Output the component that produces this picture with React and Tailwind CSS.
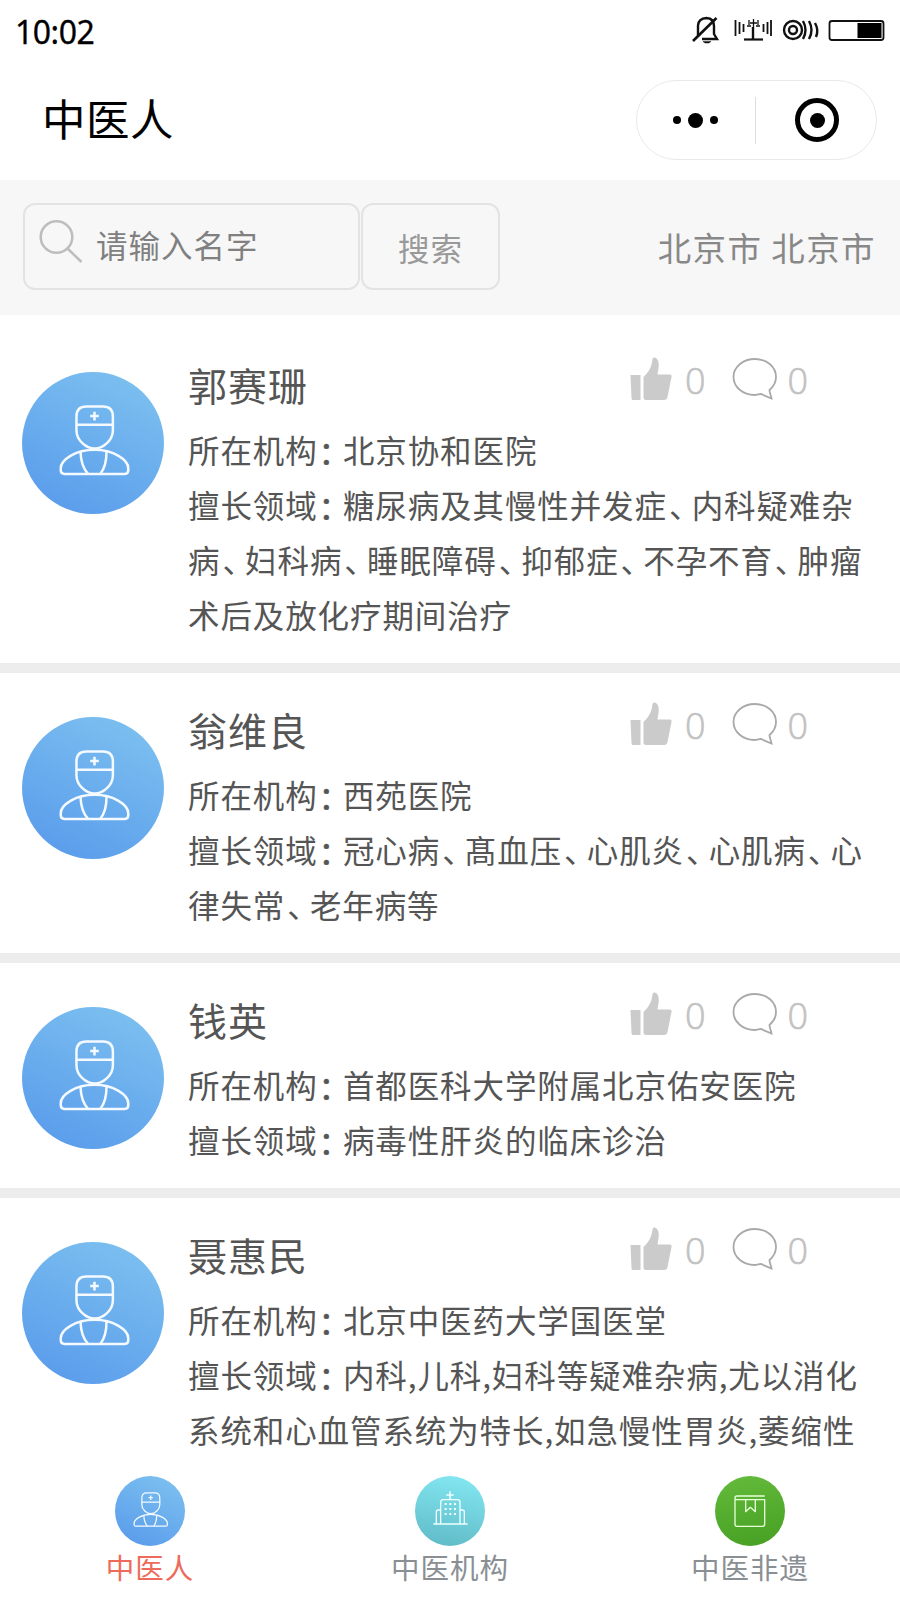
import clsx from "clsx";

const doctors = [
  {
    name: "郭赛珊",
    hospital: "北京协和医院",
    specialty: [
      "糖尿病及其慢性并发症、内科疑难杂",
      "病、妇科病、睡眠障碍、抑郁症、不孕不育、肿瘤",
      "术后及放化疗期间治疗",
    ],
  },
  {
    name: "翁维良",
    hospital: "西苑医院",
    specialty: ["冠心病、髙血压、心肌炎、心肌病、心", "律失常、老年病等"],
  },
  {
    name: "钱英",
    hospital: "首都医科大学附属北京佑安医院",
    specialty: ["病毒性肝炎的临床诊治"],
  },
  {
    name: "聂惠民",
    hospital: "北京中医药大学国医堂",
    specialty: [
      "内科,儿科,妇科等疑难杂病,尤以消化",
      "系统和心血管系统为特长,如急慢性胃炎,萎缩性",
    ],
  },
];

const tabs = [
  { label: "中医人", icon: DoctorIcon, active: true },
  { label: "中医机构", icon: HospitalIcon },
  { label: "中医非遗", icon: BookIcon },
];

function DoctorIcon({ className, id }) {
  return (
    <svg viewBox="0 0 425 425" className={className} fill="none">
      <defs>
        <linearGradient id={id} x1="0.75" y1="0" x2="0.25" y2="1">
          <stop offset="0" stopColor="#7cc0f0" />
          <stop offset="1" stopColor="#5a9ceb" />
        </linearGradient>
      </defs>
      <circle cx="212.5" cy="212.5" r="212.5" fill={`url(#${id})`} />
      <g stroke="#f4faff" strokeWidth="7.5" strokeLinejoin="round">
        <path d="M163 158V133Q163 103 193 103H242Q272 103 272 133V158Z" />
        <path d="M163 158V174C163 204 192 229 217.500 229C243 229 272 204 272 174V158" />
        <path d="M217 119V145M204 132H230" />
        <path d="M217 233C160 233 116 263 116 288V294Q116 305 127 305H308Q318 305 318 294V288C318 263 274 233 217 233Z" />
        <path d="M175 238C176 265 183 289 197 304M253 238C253 265 247 289 235 304" />
      </g>
    </svg>
  );
}

function HospitalIcon({ className, id }) {
  return (
    <svg viewBox="0 0 210 210" className={className} fill="none">
      <defs>
        <linearGradient id={id} x1="0.6" y1="0" x2="0.4" y2="1">
          <stop offset="0" stopColor="#82e6f0" />
          <stop offset="1" stopColor="#61bcc8" />
        </linearGradient>
      </defs>
      <circle cx="105" cy="105" r="105" fill={`url(#${id})`} />
      <g stroke="#f0ffff" strokeWidth="4">
        <path d="M55 144H158" />
        <path d="M77 144V79Q77 71 85 71H127Q135 71 135 79V144" />
        <path d="M64 144V108Q64 102 70 102H77M148 144V108Q148 102 142 102H135" />
        <path d="M105 46V71M94 57H116" strokeWidth="4.500" />
        <path
          d="M89 84H123M89 99H123M89 114H123"
          strokeWidth="6"
          strokeDasharray="6 8"
        />
      </g>
    </svg>
  );
}

function BookIcon({ className, id }) {
  return (
    <svg viewBox="0 0 210 210" className={className} fill="none">
      <defs>
        <linearGradient id={id} x1="0.4" y1="0" x2="0.6" y2="1">
          <stop offset="0" stopColor="#62b93a" />
          <stop offset="1" stopColor="#48a124" />
        </linearGradient>
      </defs>
      <circle cx="105" cy="105" r="105" fill={`url(#${id})`} />
      <g stroke="#e6ffd8" strokeWidth="4" strokeLinejoin="round">
        <path d="M149 60H66Q60 60 60 66V145Q60 151 66 151H143Q149 151 149 145V71H62" />
        <path d="M92 71V107L106 94L121 107V71" />
      </g>
    </svg>
  );
}

function StatusIcons() {
  return (
    <svg
      viewBox="0 0 196 32"
      className="mb-[7px] h-8 w-[196px]"
      fill="none"
      stroke="#111"
    >
      {/* muted bell */}
      <g strokeWidth="2.400">
        <path d="M8 24V12.500Q8.500 5.500 16.500 5Q24 5.500 24 13V21L27 26H12" />
        <path d="M3 28L26.500 5" strokeWidth="2.600" />
        <path d="M13 28.500H21L19 30H15Z" fill="#111" strokeWidth="0.500" />
      </g>
      {/* antenna */}
      <g strokeWidth="1.800">
        <path d="M45.500 7V23M49.500 9V21M53.500 11V19M73.500 11V19M77.500 9V21M81 7V23" />
        <path d="M59 7V12M68 7V12M63.500 6V14M57 13H61M66 13H70M60 10H67" strokeWidth="1.300" />
        <path d="M63 14V26" strokeWidth="2.400" />
        <path d="M54 26.500H73" strokeWidth="2.200" />
      </g>
      {/* hotspot */}
      <g strokeWidth="2.400">
        <circle cx="103" cy="17" r="9" />
        <circle cx="103" cy="17" r="4" />
        <path d="M113 8Q118 17 113 26M119 8Q124 17 119 26M125 10Q129 17 126 24" />
      </g>
      {/* battery */}
      <rect x="139.500" y="8" width="54" height="19" rx="2.500" strokeWidth="1.800" />
      <rect x="167.500" y="10" width="24" height="15" fill="#000" stroke="none" />
    </svg>
  );
}

// full width punctuation is set tighter than the characters around it
function Line({ text }) {
  return (
    <span className="block whitespace-nowrap">
      {text.split(/([：、])/).map((part, index) => {
        if (part === "：") {
          return (
            <span
              key={index}
              className="inline-block h-[54px] pr-[2px] pl-px align-bottom tracking-[-9.200px] [-webkit-text-stroke:0.500px_#555]"
            >
              {part}
            </span>
          );
        }
        if (part === "、") {
          return (
            <span key={index} className="pl-[2px] tracking-[-8.800px]">
              {part}
            </span>
          );
        }
        return part;
      })}
    </span>
  );
}

function Counts() {
  return (
    <div className="mt-px mr-px flex h-[44px] items-center font-['Open_Sans'] text-[36px] leading-none font-light text-[#c2c2c2] [-webkit-text-stroke:0.700px_#c2c2c2]">
      <svg viewBox="0 0 42 44" className="h-[44px] w-[42px]" fill="#cbcbcb">
        <path d="M0.500 18H10.500V43H3Q1.500 43 1.500 41Z" />
        <path d="M13.500 41V20C19 15 22 9 22.500 2Q23 0 25 0.500C29 2 29.500 8 28 14L27.500 17.500H40Q42 17.500 41.500 20L37.500 40Q37 43 34 43H16Q13.500 43 13.500 41Z" />
      </svg>
      <span className="ml-[13px] pt-[3px]">0</span>
      <svg
        viewBox="0 0 46 44"
        className="ml-[27px] h-[44px] w-[46px]"
        fill="none"
        stroke="#a9a9a9"
        strokeWidth="1.800"
      >
        <path d="M37.500 33C41.500 29.500 44 25 44 20C44 10 35 2 23 2C11 2 1.500 10 1.500 20C1.500 30 11 38 22.500 38C25 38 27 37 29 37L39.500 41.500C39 38 37.500 36 37.500 33Z" />
      </svg>
      <span className="ml-[9px] pt-[3px]">0</span>
    </div>
  );
}

function DoctorCard({ doctor, index }) {
  return (
    <li className="flex border-b-[10px] border-[#ededed] pt-7 pr-5 pb-[21px] pl-[22px]">
      <DoctorIcon
        id={`avatar-${index}`}
        className="mt-4 mr-6 h-[142px] w-[142px] shrink-0"
      />
      <div className="flex-1">
        <div className="flex h-[66px] items-start justify-between pr-[71px]">
          <h2 className="text-[39px] leading-[56px] tracking-[1px]">
            {doctor.name}
          </h2>
          <Counts />
        </div>
        <div className="text-[31.5px] leading-[55px] tracking-[0.900px]">
          <Line text={`所在机构：${doctor.hospital}`} />
          {doctor.specialty.map((line, i) => (
            <Line key={line} text={i === 0 ? `擅长领域：${line}` : line} />
          ))}
        </div>
      </div>
    </li>
  );
}

export default function App() {
  return (
    <div className="flex h-[1600px] w-[900px] flex-col overflow-hidden bg-white font-['Noto_Sans_CJK_SC',sans-serif] text-[#555]">
      <header className="h-[180px] shrink-0 text-black">
        <div className="flex h-16 items-center justify-between pr-[14px] pl-[14px]">
          <span className="pl-px font-['Noto_Sans'] text-[32px] tracking-[-0.500px] [-webkit-text-stroke:0.300px_#000]">
            10:02
          </span>
          <StatusIcons />
        </div>
        <div className="mt-4 flex h-20 items-center justify-between pr-[23px] pl-[42px]">
          <h1 className="pb-[4px] text-[43.5px] tracking-[0.5px]">中医人</h1>
          <div className="flex h-20 w-[241px] items-center rounded-full border border-[#e9e9e9]">
            <div className="flex flex-1 items-center justify-center gap-[7px]">
              <i className="size-2 rounded-full bg-black" />
              <i className="size-[15px] rounded-full bg-black" />
              <i className="size-2 rounded-full bg-black" />
            </div>
            <div className="h-[47px] w-px bg-[#ddd]" />
            <div className="flex flex-1 justify-center pl-[3px]">
              <div className="flex size-[44px] items-center justify-center rounded-full border-[5.5px] border-black">
                <i className="size-[15px] rounded-full bg-black" />
              </div>
            </div>
          </div>
        </div>
      </header>

      <section className="flex h-[135px] shrink-0 items-center bg-[#f7f7f7] pr-[24px] pl-[23px] text-[#888]">
        <label className="mt-[-3px] flex h-[87px] w-[337px] items-center rounded-xl border-2 border-[#e3e3e3]">
          <svg
            viewBox="0 0 44 44"
            className="mt-[-10px] ml-[14px] h-[44px] w-[44px]"
            fill="none"
            stroke="#bdbdbd"
            strokeWidth="2.500"
          >
            <circle cx="17.500" cy="18" r="15.800" />
            <path d="M28.500 29.500L42.500 43" />
          </svg>
          <span className="ml-[13px] pb-[2px] text-[31.5px] tracking-[1px] text-[#808080]">
            请输入名字
          </span>
        </label>
        <button className="mt-[-3px] ml-px h-[87px] w-[139px] rounded-xl border-2 border-[#e3e3e3] pt-[3px] text-[31.5px] tracking-[1px] text-[#999]">
          搜索
        </button>
        <span className="ml-auto text-[33.5px] tracking-[1.4px]">
          北京市 北京市
        </span>
      </section>

      <ul className="min-h-0 flex-1 overflow-hidden pt-[13px]">
        {doctors.map((doctor, index) => (
          <DoctorCard key={doctor.name} doctor={doctor} index={index} />
        ))}
      </ul>

      <nav className="grid h-[140px] shrink-0 grid-cols-3 bg-white">
        {tabs.map(({ label, icon: Icon, active }, index) => (
          <div key={label} className="flex flex-col items-center pt-4">
            <Icon id={`tab-${index}`} className="size-[70px]" />
            <span
              className={clsx(
                "mt-px text-[28.5px] leading-[40px] tracking-[1px]",
                active ? "text-[#ee6a5b]" : "text-[#8a8f94]"
              )}
            >
              {label}
            </span>
          </div>
        ))}
      </nav>
    </div>
  );
}
